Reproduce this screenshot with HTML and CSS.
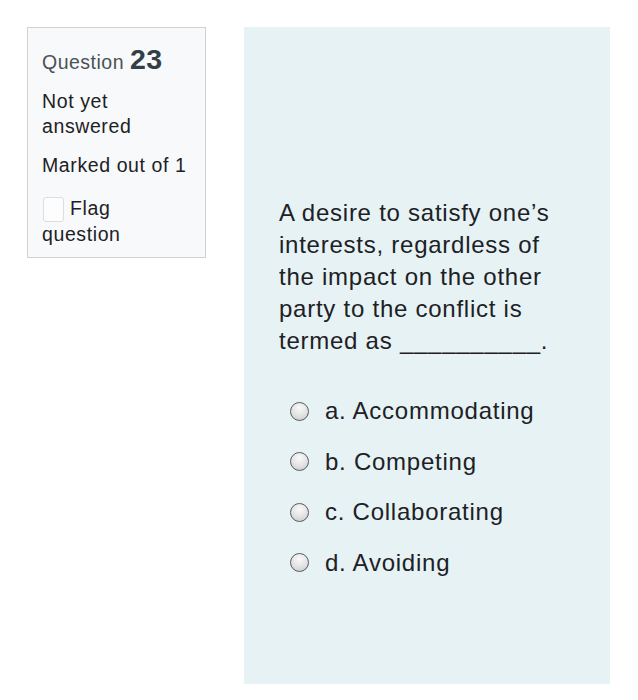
FILE: index.html
```html
<!DOCTYPE html>
<html>
<head>
<meta charset="utf-8">
<link rel="stylesheet" href="styles.css">
</head>
<body>
<div class="page">
  <div class="info">
    <h3 class="qno">Question <span class="num">23</span></h3>
    <div class="state">Not yet answered</div>
    <div class="grade">Marked out of 1</div>
    <div class="flag"><span class="check"></span>Flag question</div>
  </div>
  <div class="content">
    <p class="qtext">A desire to satisfy one’s interests, regardless of the impact on the other party to the conflict is termed as __________.</p>
    <div class="answers">
      <label class="opt"><span class="radio"></span><span>a. Accommodating</span></label>
      <label class="opt"><span class="radio"></span><span>b. Competing</span></label>
      <label class="opt"><span class="radio"></span><span>c. Collaborating</span></label>
      <label class="opt"><span class="radio"></span><span>d. Avoiding</span></label>
    </div>
  </div>
</div>
</body>
</html>
```
FILE: styles.css
```css
html, body {
  margin: 0;
  padding: 0;
  background: #ffffff;
}
body {
  font-family: "Liberation Sans", Arial, sans-serif;
  color: #1d2125;
}
.page {
  display: flex;
  align-items: flex-start;
  padding: 27px 0 0 27px;
}
.info {
  box-sizing: border-box;
  width: 179px;
  height: 231px;
  border: 1px solid #cfd2d4;
  background: #f8f9fa;
  padding: 15px 14px 0 14px;
  font-size: 19.5px;
  letter-spacing: 0.6px;
  line-height: 25px;
}
.qno {
  margin: 0 0 11px 0;
  font-weight: normal;
  font-size: 19.5px;
  letter-spacing: 0.5px;
  line-height: 32px;
  color: #4a5257;
}
.num {
  font-weight: bold;
  font-size: 28.5px;
  color: #333f48;
}
.state {
  margin-bottom: 14px;
}
.grade {
  margin-bottom: 18px;
}
.flag {
  line-height: 24px;
}
.check {
  display: inline-block;
  box-sizing: border-box;
  width: 21px;
  height: 25px;
  border: 1px solid #dcdfe1;
  border-radius: 3px;
  background: #fdfdfd;
  vertical-align: -7px;
  margin-right: 6px;
  margin-left: 1px;
}
.content {
  box-sizing: border-box;
  margin-left: 38px;
  width: 366px;
  height: 657px;
  background: #e6f2f4;
  padding: 170px 20px 0 35px;
}
.qtext {
  margin: 0;
  width: 290px;
  font-size: 24px;
  letter-spacing: 0.75px;
  line-height: 32px;
  color: #1d2125;
}
.answers {
  margin-top: 29px;
  display: flex;
  flex-direction: column;
}
.opt {
  display: flex;
  align-items: center;
  height: 50.5px;
  font-size: 24px;
  letter-spacing: 0.75px;
  color: #1d2125;
}
.radio {
  box-sizing: border-box;
  width: 19px;
  height: 19px;
  border-radius: 50%;
  border: 1px solid #575c60;
  background: radial-gradient(circle at 50% 30%, #fafafa 0%, #e2e2e2 55%, #c4c4c4 100%);
  margin: 0 16px 0 11px;
  flex: none;
}
```
